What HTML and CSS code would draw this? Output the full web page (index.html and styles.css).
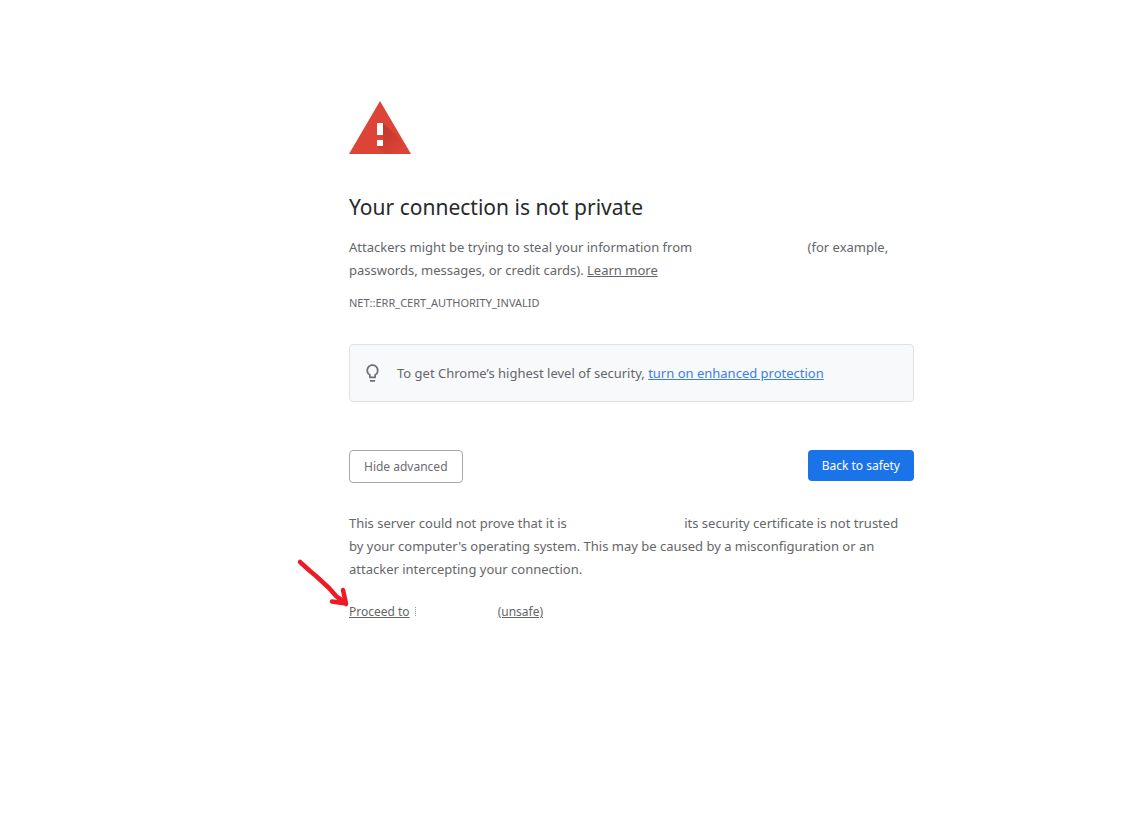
FILE: index.html
```html
<!DOCTYPE html>
<html lang="en">
<head>
<meta charset="utf-8">
<title>Privacy error</title>
<link rel="stylesheet" href="styles.css">
</head>
<body>
<main class="interstitial">
  <svg class="warning-icon" viewBox="0 0 62 53" aria-hidden="true">
    <defs>
      <linearGradient id="shade" gradientUnits="userSpaceOnUse" x1="30" y1="28" x2="50" y2="50">
        <stop offset="0" stop-color="#b93426" stop-opacity=".8"/>
        <stop offset="1" stop-color="#b93426" stop-opacity="0"/>
      </linearGradient>
    </defs>
    <path fill="#db4437" d="M31 0L62 53H0Z"/>
    <path fill="url(#shade)" d="M34 22L49 36L59 53H36L28 45V39H34V34H28Z"/>
    <path fill="#fff" d="M28 22h6v12h-6zM28 39h6v6h-6z"/>
  </svg>
  <h1 class="title">Your connection is not private</h1>
  <p class="body-text">Attackers might be trying to steal your information from <span class="site-gap site-gap-intro"></span>(for example,<br>passwords, messages, or credit cards). <a class="text-link" href="#">Learn more</a></p>
  <p class="error-code">NET::ERR_CERT_AUTHORITY_INVALID</p>
  <section class="promo">
    <svg class="bulb-icon" viewBox="0 0 24 24" aria-hidden="true">
      <path fill="#6e7175" d="M9 21c0 .5.400 1 1 1h4c.600 0 1-.5 1-1v-1H9v1zm3-19C8.100 2 5 5.100 5 9c0 2.400 1.200 4.500 3 5.700V17c0 .5.400 1 1 1h6c.600 0 1-.5 1-1v-2.300c1.800-1.200 3-3.300 3-5.700 0-3.900-3.100-7-7-7zm2.800 11.200l-.8.600V16h-4v-2.200l-.8-.6C7.800 12.200 7 10.600 7 9c0-2.800 2.200-5 5-5s5 2.200 5 5c0 1.600-.8 3.200-2.200 4.200z"/>
    </svg>
    <p class="promo-text">To get Chrome’s highest level of security, <a class="promo-link" href="#">turn on enhanced protection</a></p>
  </section>
  <div class="actions">
    <button class="button button-secondary" type="button">Hide advanced</button>
    <button class="button button-primary" type="button">Back to safety</button>
  </div>
  <p class="body-text details">This server could not prove that it is <span class="site-gap site-gap-details"></span>its security certificate is not trusted<br>by your computer's operating system. This may be caused by a misconfiguration or an<br>attacker intercepting your connection.</p>
  <p class="proceed">
    <a class="proceed-link" href="#"><span class="underlined">Proceed to</span><span class="site-gap site-gap-proceed"></span><span class="underlined">(unsafe)</span></a>
    <svg class="arrow" viewBox="0 0 54 50" aria-hidden="true">
      <path fill="none" stroke="#ed1c24" stroke-width="4.500" stroke-linecap="round" stroke-linejoin="round" d="M4 4L14 13L20 18L33 30L40 38L50 46M47 32L50 45.500L44 42M36 43.500L50 45.500L43 40"/>
    </svg>
  </p>
</main>
</body>
</html>
```
FILE: styles.css
```css
* {
  box-sizing: border-box;
}

body {
  margin: 0;
  padding-left: 123px;
  background: #fff;
  color: #646669;
  font-family: "Noto Sans", sans-serif;
  font-size: 13px;
  line-height: 23px;
}

p,
h1 {
  margin: 0;
}

.interstitial {
  max-width: 565px;
  margin: 0 auto;
  padding: 101px 0 40px;
}

.warning-icon {
  display: block;
  width: 62px;
  height: 53px;
}

.title {
  margin: 38px 0 14px;
  color: #28292c;
  font-size: 21px;
  font-weight: 400;
  line-height: 30px;
}

.text-link {
  color: inherit;
}

.site-gap {
  display: inline-block;
}

.site-gap-intro {
  width: 112px;
}

.site-gap-details {
  width: 114px;
}

.site-gap-proceed {
  width: 83px;
  height: 9px;
  margin-left: 5px;
  border-left: 1px dotted #96989b;
}

.error-code {
  margin-top: 10px;
  font-size: 11px;
  line-height: 22px;
}

.promo {
  display: flex;
  align-items: center;
  gap: 14px;
  margin-top: 30px;
  padding: 16px 12px;
  border: 1px solid #dfe1e4;
  border-radius: 4px;
  background: #f8f9fb;
}

.bulb-icon {
  width: 21px;
  height: 24px;
}

.promo-link {
  color: #3b7ded;
}

.actions {
  display: flex;
  align-items: flex-start;
  justify-content: space-between;
  margin-top: 48px;
}

.button {
  border: 1px solid #a6a8ac;
  border-radius: 4px;
  padding: 0 14px;
  font: 12px/31px "Noto Sans", sans-serif;
}

.button-secondary {
  background: #fff;
  color: #6a6c70;
}

.button-primary {
  border: 0;
  background: #1a73e8;
  color: #fff;
}

.details {
  margin-top: 29px;
}

.proceed {
  position: relative;
  margin-top: 19px;
  font-size: 12px;
}

.proceed-link {
  color: inherit;
  text-decoration: none;
}

.underlined {
  text-decoration: underline;
}

.arrow {
  position: absolute;
  top: -42px;
  left: -53px;
  width: 54px;
  height: 50px;
}
```
